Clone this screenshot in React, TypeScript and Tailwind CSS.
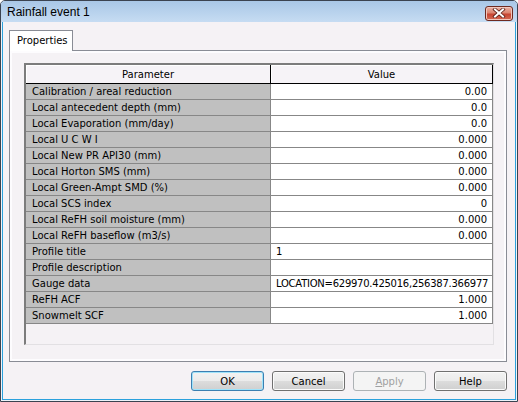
import React from "react";

const rows: { p: string; v: string; align: "left" | "right"; tight?: boolean }[] = [
  { p: "Calibration / areal reduction", v: "0.00", align: "right" },
  { p: "Local antecedent depth (mm)", v: "0.0", align: "right" },
  { p: "Local Evaporation (mm/day)", v: "0.0", align: "right" },
  { p: "Local U C W I", v: "0.000", align: "right" },
  { p: "Local New PR API30 (mm)", v: "0.000", align: "right" },
  { p: "Local Horton SMS (mm)", v: "0.000", align: "right" },
  { p: "Local Green-Ampt SMD (%)", v: "0.000", align: "right" },
  { p: "Local SCS index", v: "0", align: "right" },
  { p: "Local ReFH soil moisture (mm)", v: "0.000", align: "right" },
  { p: "Local ReFH baseflow (m3/s)", v: "0.000", align: "right" },
  { p: "Profile title", v: "1", align: "left" },
  { p: "Profile description", v: "", align: "left" },
  { p: "Gauge data", v: "LOCATION=629970.425016,256387.366977", align: "left", tight: true },
  { p: "ReFH ACF", v: "1.000", align: "right" },
  { p: "Snowmelt SCF", v: "1.000", align: "right" },
];

function Btn({ label, kind }: { label: React.ReactNode; kind?: "default" | "disabled" }) {
  if (kind === "disabled") {
    return (
      <div className="w-[73px] h-[20px] rounded-[3px] border border-[#adb2b5] bg-[#f4f4f4] flex items-center justify-center text-[#a0a0a0]">
        {label}
      </div>
    );
  }
  if (kind === "default") {
    return (
      <div className="w-[73px] h-[20px] rounded-[3px] border border-[#3c7fb1] bg-[linear-gradient(to_bottom,#f2f2f2_0%,#ebebeb_50%,#dddddd_50%,#cfcfcf_100%)] shadow-[inset_0_0_0_1px_#9fe3fa] flex items-center justify-center text-black">
        {label}
      </div>
    );
  }
  return (
    <div className="w-[73px] h-[20px] rounded-[3px] border border-[#707070] bg-[linear-gradient(to_bottom,#f2f2f2_0%,#ebebeb_50%,#dddddd_50%,#cfcfcf_100%)] shadow-[inset_0_0_0_1px_#fbfbfb] flex items-center justify-center text-black">
      {label}
    </div>
  );
}

export default function App() {
  return (
    <div className="w-[518px] h-[402px] border border-[#3b4350] rounded-t-[5px] overflow-hidden flex flex-col bg-[#eef3f9] font-['DejaVu_Sans',sans-serif] text-[10px] text-black">
      {/* Title bar */}
      <div className="h-[21px] shrink-0 bg-gradient-to-b from-[#a9c7e7] to-[#c6dcf2] flex items-center justify-between pl-[6px] pr-[4px]">
        <span className="font-['Liberation_Sans',sans-serif] text-[12px] text-black leading-none mt-[1px]">Rainfall event 1</span>
        <div className="w-[28px] h-[15px] mt-[3px] rounded-[3px] border border-[#6e2a20] bg-[linear-gradient(to_bottom,#eab1a4_0%,#dc8570_45%,#c74431_55%,#d36a55_100%)] shadow-[inset_0_0_0_1px_#f2c7bd] flex items-center justify-center">
          <svg width="14" height="10" viewBox="0 0 14 10">
            <path d="M3 1.5 L11 8.5 M11 1.5 L3 8.5" stroke="#5a1e16" strokeWidth="3.6" strokeLinecap="square" />
            <path d="M3 1.5 L11 8.5 M11 1.5 L3 8.5" stroke="#ffffff" strokeWidth="2" strokeLinecap="square" />
          </svg>
        </div>
      </div>

      {/* Body frame */}
      <div className="flex-1 flex flex-col px-[1px] pb-[1px]">
        <div className="flex-1 flex flex-col border-x border-b border-[#2ba1dc] bg-[#f5f2f5] pt-[8px] pl-[6px] pr-[8px] pb-[8px]">
          {/* Tab strip */}
          <div className="flex">
            <div className="relative z-10 -mb-px h-[21px] w-[64px] border border-b-0 border-[#898c95] bg-white flex items-center pl-[7px] pb-[1px]">
              Properties
            </div>
          </div>
          {/* Tab panel */}
          <div className="flex-1 border border-[#898c95]">
            <div className="h-full border-2 border-[#fdfcfe] pl-[12px] pt-[10px]">
              {/* Grid */}
              <div className="w-[470px] h-[282px] border-t-2 border-l-2 border-t-[#7c7c7c] border-l-[#7c7c7c] border-r border-b border-r-[#e2e0e3] border-b-[#e2e0e3] bg-[#f5f2f5] flex flex-col">
                {/* Header */}
                <div className="flex h-[19px] shrink-0 border-b border-black">
                  <div className="w-[245px] border-r border-black shadow-[inset_1px_1px_0_#ffffff] bg-[#f6f3f7] flex items-center justify-center">
                    Parameter
                  </div>
                  <div className="w-[222px] border-r border-black shadow-[inset_1px_1px_0_#ffffff] bg-[#f6f3f7] flex items-center justify-center">
                    Value
                  </div>
                </div>
                {rows.map((r) => (
                  <div key={r.p} className="flex h-[16px] shrink-0">
                    <div className="w-[245px] bg-[#c0c0c0] border-r border-b border-[#878787] pl-[6px] flex items-center whitespace-nowrap overflow-hidden">
                      {r.p}
                    </div>
                    <div
                      className={
                        r.align === "right"
                          ? "w-[222px] bg-white border-r border-b border-[#878787] pr-[5px] flex items-center justify-end whitespace-nowrap overflow-hidden"
                          : "w-[222px] bg-white border-r border-b border-[#878787] pl-[5px] flex items-center justify-start whitespace-nowrap overflow-hidden"
                      }
                    >
                      <span className={r.tight ? "tracking-[-0.25px]" : ""}>{r.v}</span>
                    </div>
                  </div>
                ))}
              </div>
            </div>
          </div>
          {/* Buttons */}
          <div className="mt-[9px] flex justify-end gap-[8px]">
            <Btn label="OK" kind="default" />
            <Btn label="Cancel" />
            <Btn
              label={
                <span>
                  <span className="underline">A</span>pply
                </span>
              }
              kind="disabled"
            />
            <Btn label="Help" />
          </div>
        </div>
      </div>
    </div>
  );
}
